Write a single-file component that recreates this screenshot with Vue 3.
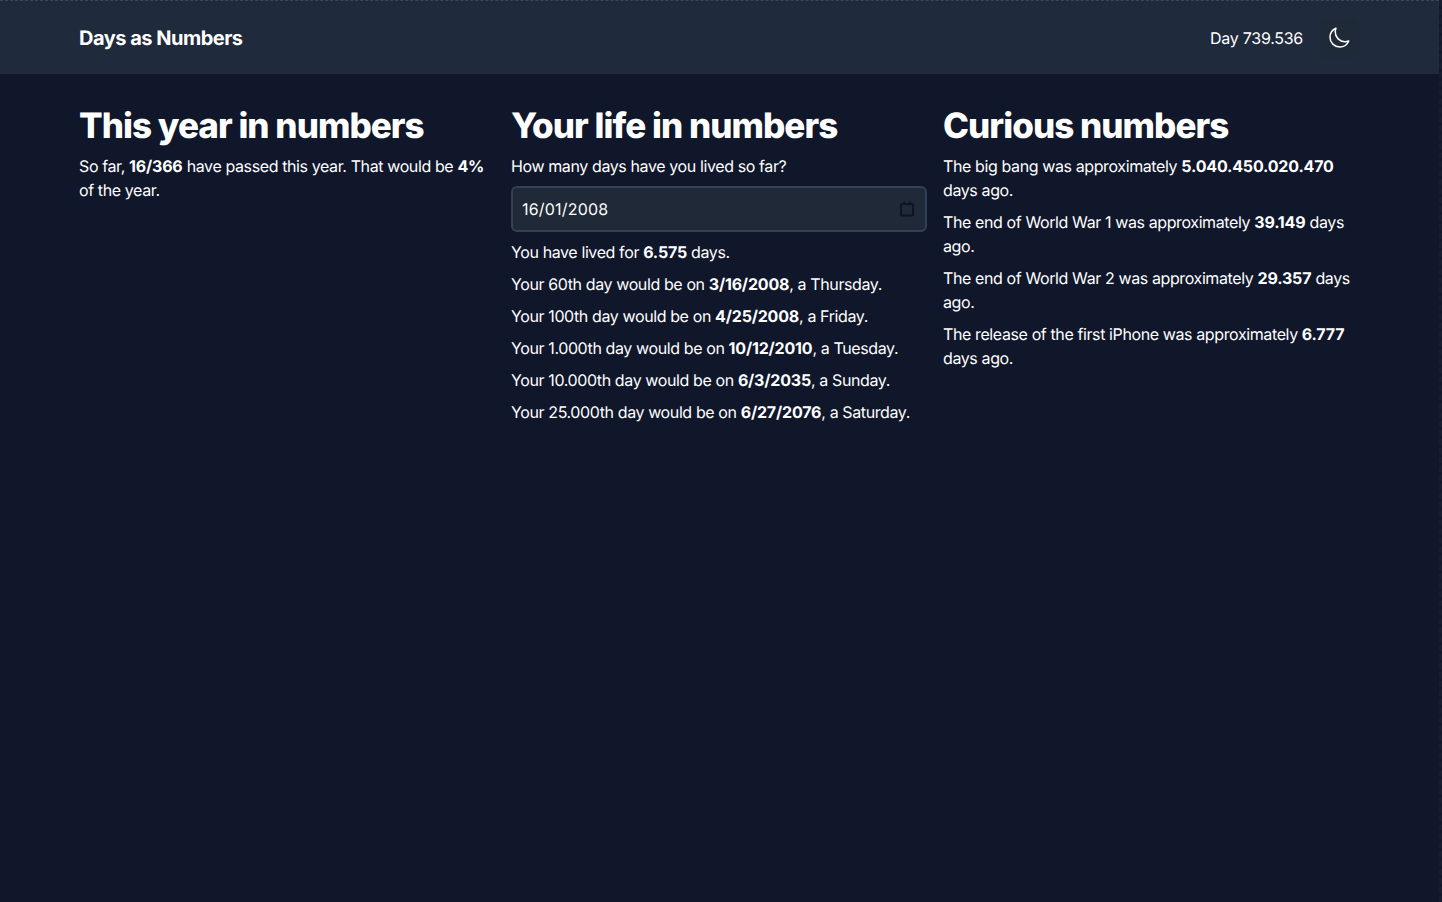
<script setup>
const lifeRows = [
  { pre: 'You have lived for ', b: '6.575', post: ' days.' },
  { pre: 'Your 60th day would be on ', b: '3/16/2008', post: ', a Thursday.' },
  { pre: 'Your 100th day would be on ', b: '4/25/2008', post: ', a Friday.' },
  { pre: 'Your 1.000th day would be on ', b: '10/12/2010', post: ', a Tuesday.' },
  { pre: 'Your 10.000th day would be on ', b: '6/3/2035', post: ', a Sunday.' },
  { pre: 'Your 25.000th day would be on ', b: '6/27/2076', post: ', a Saturday.' }
]
const curious = [
  { pre: 'The big bang was approximately ', b: '5.040.450.020.470', post: ' days ago.' },
  { pre: 'The end of World War 1 was approximately ', b: '39.149', post: ' days ago.' },
  { pre: 'The end of World War 2 was approximately ', b: '29.357', post: ' days ago.' },
  { pre: 'The release of the first iPhone was approximately ', b: '6.777', post: ' days ago.' }
]
</script>

<template>
  <div class="page">
    <header class="nav">
      <div class="nav-inner">
        <span class="brand">Days as Numbers</span>
        <div class="nav-right">
          <span class="day">Day 739.536</span>
          <button class="theme" aria-label="Toggle theme">
            <svg width="24" height="24" viewBox="0 0 24 24" fill="none" stroke="currentColor" stroke-width="1.5" stroke-linecap="round" stroke-linejoin="round">
              <path d="M21.752 15.002A9.718 9.718 0 0 1 18 15.75c-5.385 0-9.75-4.365-9.75-9.75 0-1.33.266-2.597.748-3.752A9.753 9.753 0 0 0 3 11.25C3 16.635 7.365 21 12.75 21a9.753 9.753 0 0 0 9.002-5.998Z" />
            </svg>
          </button>
        </div>
      </div>
    </header>
    <main class="grid">
      <section>
        <h2>This year in numbers</h2>
        <p>So far, <b>16/366</b> have passed this year. That would be <b>4%</b> of the year.</p>
      </section>
      <section>
        <h2>Your life in numbers</h2>
        <p>How many days have you lived so far?</p>
        <div class="date">
          <span class="date-value">16/01/2008</span>
          <svg class="cal" width="16" height="16" viewBox="0 0 16 16" fill="none" stroke="#0d1425" stroke-width="2">
            <rect x="2" y="3" width="12" height="11.5" rx="1.5" />
            <path d="M5 0.8v2.4M11 0.8v2.4" />
          </svg>
        </div>
        <p v-for="r in lifeRows" :key="r.b">{{ r.pre }}<b>{{ r.b }}</b>{{ r.post }}</p>
      </section>
      <section>
        <h2>Curious numbers</h2>
        <p v-for="r in curious" :key="r.b">{{ r.pre }}<b>{{ r.b }}</b>{{ r.post }}</p>
      </section>
    </main>
  </div>
</template>

<style>
html, body { margin: 0; background: #10172b; }
</style>

<style scoped>
.page {
  min-height: 902px;
  box-sizing: border-box;
  border-right: 3px dashed #161d30;
  background: #10172b;
  color: #fff;
  font-family: Inter, "Liberation Sans", sans-serif;
  font-size: 16px;
  line-height: 24px;
  font-optical-sizing: none;
  text-rendering: geometricPrecision;
}
.nav {
  height: 74px;
  box-sizing: border-box;
  border-top: 1px dashed #3b4757;
  background: #1f2a3c;
  display: flex;
  align-items: center;
}
.nav-inner {
  width: 1296px;
  margin-left: 71px;
  padding: 0 8px;
  box-sizing: border-box;
  display: flex;
  justify-content: space-between;
  align-items: center;
}
.brand { font-size: 20px; font-weight: 700; letter-spacing: -0.5px; }
.day { letter-spacing: -0.27px; }
.nav-right { display: flex; align-items: center; gap: 16px; }
.theme {
  width: 40px;
  height: 40px;
  display: flex;
  align-items: center;
  justify-content: center;
  padding: 0;
  border: 0;
  border-radius: 8px;
  background: #1f2937;
  color: #fff;
}
.grid {
  width: 1296px;
  margin-left: 71px;
  padding-top: 32px;
  display: grid;
  grid-template-columns: repeat(3, 1fr);
}
section { padding: 0 8px; }
h2 {
  margin: 0 0 7px;
  font-size: 35px;
  line-height: 41px;
  font-weight: 800;
  letter-spacing: -0.95px;
}
p { margin: 0 0 8px; letter-spacing: -0.39px; }
b { font-weight: 700; letter-spacing: -0.18px; }
.date-value { letter-spacing: 0.2px; }
.date {
  height: 46px;
  box-sizing: border-box;
  margin-bottom: 8px;
  padding: 0 10px 0 9px;
  display: flex;
  align-items: center;
  justify-content: space-between;
  background: #1f2937;
  border: 2px solid #334155;
  border-radius: 6px;
}
</style>
